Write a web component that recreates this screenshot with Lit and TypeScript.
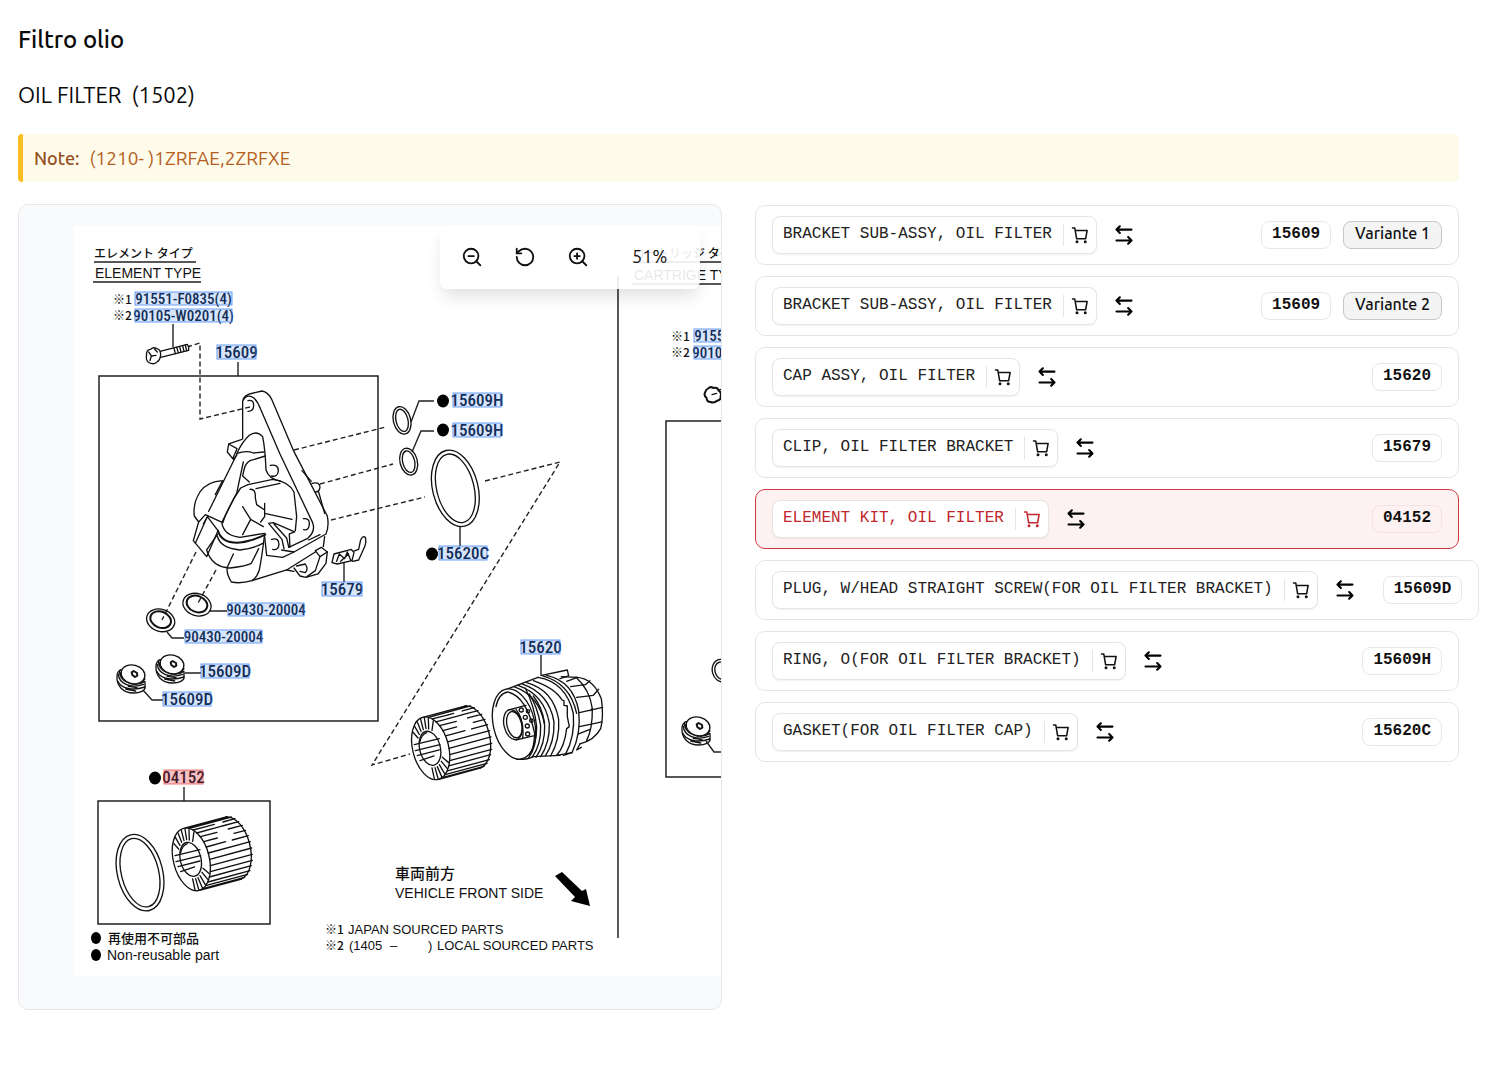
import { LitElement, html, svg, css } from "lit";
import { customElement, property } from "lit/decorators.js";
import { classMap } from "lit/directives/class-map.js";

interface Part {
  name: string;
  code: string;
  variant?: string;
  selected?: boolean;
}

interface Callout {
  code: string;
  x: number;
  y: number;
  w: number;
  small?: boolean;
  active?: boolean;
}

const PARTS: Part[] = [
  { name: "BRACKET SUB-ASSY, OIL FILTER", code: "15609", variant: "Variante 1" },
  { name: "BRACKET SUB-ASSY, OIL FILTER", code: "15609", variant: "Variante 2" },
  { name: "CAP ASSY, OIL FILTER", code: "15620" },
  { name: "CLIP, OIL FILTER BRACKET", code: "15679" },
  { name: "ELEMENT KIT, OIL FILTER", code: "04152", selected: true },
  { name: "PLUG, W/HEAD STRAIGHT SCREW(FOR OIL FILTER BRACKET)", code: "15609D" },
  { name: "RING, O(FOR OIL FILTER BRACKET)", code: "15609H" },
  { name: "GASKET(FOR OIL FILTER CAP)", code: "15620C" },
];

const CALLOUTS: Callout[] = [
  { code: "91551-F0835(4)", x: 135, y: 292, w: 97, small: true },
  { code: "90105-W0201(4)", x: 135, y: 309, w: 97, small: true },
  { code: "15609", x: 217, y: 345, w: 39 },
  { code: "15609H", x: 453, y: 393, w: 48 },
  { code: "15609H", x: 453, y: 423, w: 48 },
  { code: "15620C", x: 439, y: 546, w: 48 },
  { code: "15679", x: 322, y: 582, w: 40 },
  { code: "90430-20004", x: 228, y: 603, w: 76, small: true },
  { code: "90430-20004", x: 185, y: 630, w: 77, small: true },
  { code: "15609D", x: 201, y: 664, w: 48 },
  { code: "15609D", x: 163, y: 692, w: 48 },
  { code: "15620", x: 521, y: 640, w: 39 },
  { code: "04152", x: 164, y: 770, w: 39, active: true },
  { code: "91551-F0835(4)", x: 694, y: 329, w: 97, small: true },
  { code: "90105-W0201(4)", x: 694, y: 346, w: 97, small: true },
];

/* Point on an ellipse tilted by `tilt` degrees. */
function onEllipse(cx: number, cy: number, rx: number, ry: number, tilt: number, deg: number) {
  const t = (deg * Math.PI) / 180;
  const a = (tilt * Math.PI) / 180;
  const x = rx * Math.cos(t);
  const y = ry * Math.sin(t);
  return [
    Math.round(cx + x * Math.cos(a) - y * Math.sin(a)),
    Math.round(cy + x * Math.sin(a) + y * Math.cos(a)),
  ];
}

/* Pleated paper filter element, drawn at three units per pixel. */
function filterElement(transform: string) {
  const lines: string[] = [];
  for (let i = 0; i <= 15; i++) {
    const deg = -84 + i * 11.5;
    const [x, y] = onEllipse(212, 925, 54, 96, -14, deg);
    if (i < 7 && i > 1) {
      const cut = 34 + ((i * 17) % 26);
      lines.push(`M${x} ${y}l${cut} ${Math.round(-cut * 0.27)}`);
      const back = 30 + ((i * 13) % 20);
      lines.push(`M${x + 126} ${y - 34}l${-back} ${Math.round(back * 0.27)}`);
      if (i < 4) lines.push(`M${x + cut} ${Math.round(y - cut * 0.27)}l22 -6`);
    } else {
      lines.push(`M${x} ${y}l126 -34`);
    }
  }
  const rim: string[] = [];
  for (const deg of [-140, -126, -112, -99, -86, -73, -58, 36, 50, 64, 77, 90, 103]) {
    const [x1, y1] = onEllipse(212, 925, 52, 93, -14, deg);
    const [x2, y2] = onEllipse(210, 925, 36, 60, -14, deg);
    rim.push(`M${x1} ${y1}L${x2} ${y2}`);
  }
  const [tx, ty] = onEllipse(338, 891, 54, 96, -14, -90);
  const [bx, by] = onEllipse(338, 891, 54, 96, -14, 90);
  return svg`<g class="ink" transform=${transform}>
    <ellipse class="paper" cx="212" cy="925" rx="54" ry="96" transform="rotate(-14 212 925)" />
    <ellipse cx="210" cy="925" rx="31" ry="52" transform="rotate(-14 210 925)" />
    <path d=${`M${tx} ${ty}A54 96 -14 0 1 ${bx} ${by}`} />
    <path d=${lines.join("")} />
    <path d=${rim.join("")} />
    <path d="M163 914L238 896M166 932L240 914M172 947L238 930M180 962L222 948M180 905Q184 884 200 878" />
  </g>`;
}

/* Threaded plug with a hex socket, drawn at three units per pixel. */
function plug(transform: string) {
  return svg`<g class="ink" transform=${transform}>
    <path class="paper" d="M-42 -8C-44 20 -24 42 8 42C28 42 42 34 42 26V8L-30 -28C-38 -24 -42 -16 -42 -8Z" />
    <path d="M-40 6C-30 30 6 36 42 24M-34 -26C-40 6 10 28 40 8M-32 -18C-34 10 14 22 42 0M-38 -14C-36 14 0 30 38 16" />
    <path d="M-16 30L14 36M-8 22L18 26" />
    <ellipse class="paper" cx="6" cy="-14" rx="36" ry="28" transform="rotate(14 6 -14)" />
    <path class="bold" d="M2 -20L8 -24L18 -18L19 -10L12 -6L4 -12Z" />
  </g>`;
}

function oRing(cx: number, cy: number, rx: number, ry: number, gap: number, tilt = -14) {
  const t = `rotate(${tilt} ${cx} ${cy})`;
  return svg`<ellipse cx=${cx} cy=${cy} rx=${rx} ry=${ry} transform=${t} />
    <ellipse cx=${cx} cy=${cy} rx=${rx - gap} ry=${ry - gap} transform=${t} />`;
}

@customElement("parts-diagram")
export class PartsDiagram extends LitElement {
  static styles = css`
    :host {
      display: block;
      line-height: 0;
    }
    .sheet {
      display: block;
      width: 100%;
      height: auto;
    }
    .page {
      fill: #fff;
    }
    .ink {
      fill: none;
      stroke: #111;
      stroke-width: 4;
      stroke-linecap: round;
      stroke-linejoin: round;
    }
    .ink .bold {
      stroke-width: 6;
    }
    .ink .paper {
      fill: #fff;
    }
    .fine {
      fill: none;
      stroke: #222;
      stroke-width: 1.4;
    }
    .frame {
      fill: none;
      stroke: #222;
      stroke-width: 1.5;
    }
    .dash {
      fill: none;
      stroke: #222;
      stroke-width: 1.4;
      stroke-dasharray: 5 3;
    }
    .dot {
      fill: #000;
    }
    .note {
      fill: #111;
      font-family: "Liberation Sans", "Noto Sans CJK JP", sans-serif;
    }
    .s12 {
      font-size: 12px;
    }
    .s13 {
      font-size: 13px;
    }
    .s14 {
      font-size: 14px;
    }
    .s15 {
      font-size: 15px;
    }
    .jp {
      font-family: "Noto Sans CJK JP", sans-serif;
      font-weight: 500;
    }
    .code {
      fill: #0b1730;
      font-family: "Roboto Condensed", "Liberation Sans Narrow", sans-serif;
      font-size: 17px;
      font-weight: 500;
    }
    .code.small {
      font-size: 15px;
    }
    .spot {
      fill: #3b82f6;
      fill-opacity: 0.2;
      stroke: #3b82f6;
      stroke-opacity: 0.75;
    }
    .spot.active {
      fill: #dc2626;
      fill-opacity: 0.28;
      stroke: #dc2626;
      stroke-opacity: 0.6;
    }
  `;

  private callout(c: Callout) {
    const h = c.small ? 13 : 14;
    return svg`<g>
      <text class=${classMap({ code: true, small: !!c.small })} x=${c.x + c.w / 2} y=${c.y + h - 1}
        text-anchor="middle">${c.code}</text>
      <rect class=${classMap({ spot: true, active: !!c.active })} x=${c.x} y=${c.y} width=${c.w} height=${h} />
    </g>`;
  }

  render() {
    return html`<svg class="sheet" viewBox="19 205 702 804" role="img" aria-label="OIL FILTER (1502)">
      <rect class="page" x="74" y="226" width="900" height="750" />

      <text class="note jp s12" x="94" y="258">エレメント タイプ</text>
      <text class="note s14" x="95" y="278">ELEMENT TYPE</text>
      <text class="note jp s12" x="633" y="258">カートリッジ タイプ</text>
      <text class="note s14" x="634" y="280">CARTRIGE TYPE</text>
      <path class="frame" d="M94 262H196M93 282H201M632 262H740M632 284H740" />
      <text class="note jp s12" x="113" y="304">※1</text>
      <text class="note jp s12" x="113" y="320">※2</text>
      <text class="note jp s12" x="671" y="341">※1</text>
      <text class="note jp s12" x="671" y="357">※2</text>

      <path class="frame" d="M99 376H378V721H99ZM98 801H270V924H98ZM618 276V938M760 421H666V777H760" />
      <path class="fine" d="M238 362V376M173 324V347M184 787V801M344 563V582M460 527V546M541 655V676
        M411 422L419 401H434M412 452L421 431H434M209 611H227M167 632L172 638H184M185 673H201M142 689L152 700H163" />
      <path class="dash" d="M187 347L200 343V419L250 407M294 450L386 427M320 484L393 464M331 520L425 497
        M485 481L560 462L372 765L410 754M196 552L162 620M216 570L197 605" />
      <ellipse class="dot" cx="443" cy="401" rx="6" ry="6.500" />
      <ellipse class="dot" cx="443" cy="430" rx="6" ry="6.500" />
      <ellipse class="dot" cx="432" cy="554" rx="6" ry="6.500" />
      <ellipse class="dot" cx="155" cy="778" rx="6" ry="6.500" />
      <ellipse class="dot" cx="96" cy="938" rx="5" ry="6" />
      <ellipse class="dot" cx="96" cy="955" rx="5" ry="6" />

      <!-- flange bolt -->
      <g class="ink" transform="translate(70 220) scale(.3333)">
        <path class="paper" d="M270 394L352 373Q358 380 356 391L272 412" />
        <path d="M312 384L316 401M320 382L325 398M329 380L333 396M338 377L342 394M346 375L350 392" />
        <path class="paper" d="M230 398Q232 388 242 388Q250 380 260 386Q272 388 272 404Q271 420 262 425Q254 434 243 430Q230 428 229 414Z" />
        <path d="M236 396L244 408L258 406M244 408L240 422M254 388L262 396" />
      </g>

      <!-- filter bracket -->
      <g class="ink" transform="translate(90 370) scale(.3333)">
        <path d="M458 206V94Q461 74 490 69L516 63Q534 66 545 88L575 158L612 245L712 438Q718 470 708 492L612 546L575 540" />
        <path d="M460 90Q472 70 492 84Q504 96 512 118L570 252L668 458Q678 484 652 506L596 532" />
        <path d="M474 92Q492 88 491 108Q490 124 474 124M541 286Q566 282 565 304Q562 322 545 318M640 446Q660 444 658 464Q656 482 641 479M545 508Q567 502 567 524Q565 542 548 538" />
        <path d="M456 208L416 222L412 246L430 268L440 256M416 222L441 236L428 266M441 250Q456 216 478 196Q500 180 518 200Q526 240 528 300Q536 326 572 334" />
        <path d="M441 250Q470 240 490 249L522 246M526 258L480 272Q466 280 462 300L458 318L478 336M441 252L356 424M460 276L440 370L396 456" />
        <path d="M398 332Q352 334 330 366Q308 400 313 438L326 456M398 332L376 374M326 456L346 434L398 458M340 462L352 440L384 482L350 560L310 512L326 456M316 520L352 440" />
        <path d="M398 458Q420 398 452 354L474 344L548 328Q596 334 612 366L620 440L616 482M498 356L570 340M480 358Q498 356 496 384L500 404L524 420V440L512 456M524 400V440M524 430L606 448" />
        <path d="M458 410L482 448L520 470M482 448L458 494M396 460Q402 496 450 502L524 490" />
        <path class="bold" d="M384 482Q394 518 442 518Q480 516 526 494" />
        <path d="M382 498Q390 534 450 540Q490 536 518 520M350 540Q366 592 420 594Q470 588 484 580L506 536M350 540L382 494M524 492Q516 560 508 600Q500 624 486 632Q452 642 424 636Q408 610 412 592L430 552" />
        <path d="M536 460L550 458L614 486L598 492L600 532M536 460L576 508L582 536M552 462L590 504L596 530" />
        <path d="M524 500L530 556L578 562L612 546M486 632L590 600L676 546M676 542L694 532L712 546L690 560Z" />
        <path d="M712 546L708 580L684 612L648 622L630 618L612 594M690 560L676 602L648 622M620 588L646 582Q656 598 646 608L630 604M590 600L612 604" />
        <path d="M636 302L664 334M666 340Q690 334 690 352Q688 366 676 366M686 366L704 430M704 500L700 530M656 510L690 494" />
        <path d="M726 578L732 552L784 538L792 548L786 572L742 582ZM740 574L748 552L764 566L772 546L782 570M752 574L776 552M790 544L806 538L812 510Q818 496 826 502Q830 514 824 530L806 570L788 574" />
      </g>

      <!-- sealing rings and plugs -->
      <g class="ink" transform="translate(90 580) scale(.3333)">
        <ellipse cx="321" cy="74" rx="43" ry="33" transform="rotate(18 321 74)" />
        <ellipse class="bold" cx="321" cy="72" rx="32" ry="24" transform="rotate(22 321 72)" />
        <ellipse cx="212" cy="121" rx="43" ry="33" transform="rotate(18 212 121)" />
        <ellipse class="bold" cx="212" cy="119" rx="32" ry="24" transform="rotate(22 212 119)" />
      </g>
      ${plug("translate(170 669) scale(.3333)")}
      ${plug("translate(131 679) scale(.3333)")}
      ${plug("translate(696 731) scale(.3333)")}
      <path class="fine" d="M706 741L714 752H730" />

      <!-- O-rings -->
      <g class="ink" transform="translate(360 440) scale(.3333)">
        ${oRing(126, -59, 26, 42, 8)}
        ${oRing(146, 65, 26, 41, 8)}
        ${oRing(286, 145, 68, 117, 12)}
      </g>
      <g class="ink" transform="translate(80 760) scale(.3333)">
        ${oRing(180, 338, 68, 117, 12)}
      </g>

      ${filterElement("translate(360 440) scale(.3333)")}
      ${filterElement("translate(80 760) scale(.3333) translate(122 -627)")}

      <!-- filter cap -->
      <g class="ink" transform="translate(360 440) scale(.3333)">
        <path d="M604 710L652 712Q700 716 724 776Q732 830 722 866Q704 900 660 912" />
        <path d="M648 712Q690 750 697 806Q698 866 680 902M620 724L652 712M632 740L676 734M650 772L700 766M658 818L728 802M658 860L726 846M656 882L690 868M676 734L690 722M700 766L716 748M696 806L690 812M660 912L650 930L664 922" />
        <path d="M545 706L622 690L626 708L600 716M560 706Q640 724 656 812Q664 880 636 938L610 946" />
        <path d="M534 712Q618 726 640 820Q646 890 616 944M548 708Q630 730 650 820" />
        <path d="M520 722Q584 744 606 780L612 782V796L622 798V830L628 860L620 866Q614 920 590 946L636 938" />
        <path d="M440 748L534 712M470 958Q500 960 520 950L600 946" />
        <path d="M500 728Q580 750 596 838Q600 900 572 948M486 732Q568 760 582 846Q584 906 556 948M474 736Q554 764 568 850Q570 908 542 950M462 740Q540 768 554 856Q556 912 528 952" />
        <path d="M520 768Q546 800 554 850M508 762Q532 800 542 856Q544 916 516 952M496 744Q524 800 530 860Q530 920 506 954" />
        <ellipse class="paper" cx="462" cy="852" rx="62" ry="107" transform="rotate(-13 462 852)" />
        <path d="M408 800Q416 760 444 756Q500 770 524 880Q522 930 508 944" />
        <ellipse cx="459" cy="854" rx="27" ry="46" transform="rotate(-13 459 854)" />
        <ellipse cx="463" cy="854" rx="22" ry="40" transform="rotate(-13 463 854)" />
        <path d="M446 810L498 796M470 900L520 888M468 808Q494 840 488 896" />
        <circle cx="484" cy="810" r="6" />
        <circle cx="496" cy="832" r="6" />
        <circle cx="502" cy="858" r="6" />
        <circle cx="503" cy="882" r="6" />
        <circle cx="504" cy="814" r="5" />
        <circle cx="514" cy="842" r="5" />
      </g>

      <!-- right-hand sheet fragments -->
      <g class="ink" transform="translate(400 220) scale(.3333)">
        <path class="bold" d="M924 506Q932 498 940 504Q952 500 956 512Q966 518 962 528Q964 540 952 542Q942 550 932 546Q920 546 920 534Q910 526 916 516Q918 508 924 506Z" />
        <path d="M936 524L950 520M956 510L968 507" />
      </g>
      <g class="ink" transform="translate(640 380) scale(.3333)">
        ${oRing(244, 872, 27, 34, 8)}
      </g>

      <path class="dot" d="M555 876L562 872L582 891L586 889L590 906L571 901L575 897Z" />
      <text class="note jp s15" x="395" y="879">車両前方</text>
      <text class="note s14" x="395" y="898">VEHICLE FRONT SIDE</text>
      <text class="note jp s12" x="325" y="934">※1</text>
      <text class="note s13" x="348" y="934">JAPAN SOURCED PARTS</text>
      <text class="note jp s12" x="325" y="950">※2</text>
      <text class="note s13" x="349" y="950">(1405</text>
      <text class="note s13" x="390" y="950">–</text>
      <text class="note s13" x="428" y="950">)</text>
      <text class="note s13" x="437" y="950">LOCAL SOURCED PARTS</text>
      <text class="note jp s13" x="108" y="943">再使用不可部品</text>
      <text class="note s14" x="107" y="960">Non-reusable part</text>

      ${CALLOUTS.map((c) => this.callout(c))}
    </svg>`;
  }
}

@customElement("part-row")
export class PartRow extends LitElement {
  @property({ attribute: false }) part!: Part;

  static styles = css`
    :host {
      display: block;
    }
    .row {
      display: flex;
      align-items: center;
      gap: 8px;
      box-sizing: border-box;
      min-width: max-content;
      height: 60px;
      padding: 0 16px;
      border: 1px solid #e5e5e5;
      border-radius: 10px;
      background: #fff;
    }
    .chip {
      display: flex;
      align-items: center;
      height: 36px;
      border: 1px solid #e5e5e5;
      border-radius: 8px;
      background: #fff;
      box-shadow: 0 1px 2px rgb(0 0 0 / 6%);
    }
    .name,
    .code {
      font-family: "Liberation Mono", monospace;
      font-size: 16px;
      white-space: pre;
    }
    .name {
      padding: 0 11px 2px 10px;
      color: #222;
      line-height: 20px;
    }
    button {
      display: flex;
      align-items: center;
      justify-content: center;
      margin: 0;
      border: 0;
      background: none;
      color: #111;
      cursor: pointer;
    }
    .cart {
      height: 22px;
      padding: 0 7px;
      border-left: 1px solid #e5e5e5;
    }
    .swap {
      padding: 8px 9px;
      color: #000;
    }
    svg {
      fill: none;
      stroke: currentColor;
      stroke-width: 2;
      stroke-linecap: round;
      stroke-linejoin: round;
    }
    .swap svg {
      stroke-width: 2.5;
    }
    .tags {
      display: flex;
      gap: 12px;
      margin-left: auto;
      padding-left: 11px;
    }
    .tag {
      box-sizing: border-box;
      height: 28px;
      padding: 0 10px;
      border: 1px solid #e8e8e8;
      border-radius: 8px;
      color: #111;
      line-height: 24px;
    }
    .code {
      font-weight: 700;
    }
    .variant {
      padding: 0 11px;
      border-color: #c6c6c6;
      background: #f4f4f4;
      font-size: 16px;
      font-weight: 500;
      line-height: 22px;
    }
    .selected {
      border-color: #d03a40;
      background: #fef1f1;
    }
    .selected .name,
    .selected .cart {
      color: #c1272d;
    }
    .selected .tag {
      border-color: #f3e3e3;
    }
  `;

  render() {
    const { name, code, variant, selected } = this.part;
    return html`<div class=${classMap({ row: true, selected: !!selected })}>
      <div class="chip">
        <span class="name">${name}</span>
        <button class="cart" type="button" aria-label="Aggiungi al carrello">
          <svg width="18" height="18" viewBox="0 0 24 24">
            <circle cx="8" cy="21" r="1" />
            <circle cx="19" cy="21" r="1" />
            <path d="M2 2.500h3l2.500 14.500h12l2-11H6" />
          </svg>
        </button>
      </div>
      <button class="swap" type="button" aria-label="Alternative">
        <svg width="20" height="20" viewBox="0 0 24 24">
          <path d="M21 5.500H3M7 1.500L3 5.500L7 9.500M3 18.500H21M17 14.500L21 18.500L17 22.500" />
        </svg>
      </button>
      <div class="tags">
        <span class="tag code">${code}</span>
        ${variant ? html`<span class="tag variant">${variant}</span>` : null}
      </div>
    </div>`;
  }
}

@customElement("app-root")
export class AppRoot extends LitElement {
  static styles = css`
    :host {
      display: block;
      box-sizing: border-box;
      min-height: 100vh;
      padding: 24px 34px 24px 18px;
      overflow-x: hidden;
      background: #fff;
      color: #0a0a0a;
      font-family: Ubuntu, "Noto Sans", sans-serif;
    }
    h1,
    h2 {
      margin: 0;
      line-height: 32px;
      white-space: pre;
    }
    h1 {
      font-size: 24px;
      font-weight: 500;
    }
    h2 {
      margin-top: 23px;
      font-size: 22px;
      font-weight: 400;
    }
    .note {
      display: flex;
      align-items: center;
      gap: 10px;
      box-sizing: border-box;
      height: 48px;
      margin: 23px 0 22px;
      padding-left: 11px;
      border-left: 5px solid #fbbf24;
      border-radius: 4px;
      background: #fffbeb;
      color: #b45f1d;
      font-size: 19px;
      line-height: 24px;
    }
    .note strong {
      color: #92501d;
      font-size: 18px;
      font-weight: 500;
    }
    .columns {
      display: grid;
      grid-template-columns: repeat(2, minmax(0, 1fr));
      align-items: start;
      gap: 33px;
    }
    .viewer {
      position: relative;
      overflow: hidden;
      border: 1px solid #e5e7eb;
      border-radius: 10px;
      background: #f9fafc;
    }
    .toolbar {
      position: absolute;
      top: 20px;
      right: 21px;
      display: flex;
      align-items: center;
      gap: 11px;
      box-sizing: border-box;
      width: 260px;
      height: 64px;
      padding: 0 11px;
      border-radius: 8px;
      background: rgb(255 255 255 / 90%);
      box-shadow: 0 10px 18px -4px rgb(0 0 0 / 14%);
      font-size: 18px;
    }
    .toolbar button {
      display: flex;
      align-items: center;
      justify-content: center;
      width: 42px;
      height: 42px;
      padding: 0;
      border: 0;
      background: none;
      color: #111;
      cursor: pointer;
    }
    .toolbar svg {
      fill: none;
      stroke: currentColor;
      stroke-width: 2;
      stroke-linecap: round;
      stroke-linejoin: round;
    }
    .toolbar output {
      flex: 1;
      padding: 0 0 2px 22px;
      color: #111;
    }
    .parts {
      display: grid;
      grid-template-columns: minmax(0, 1fr);
      gap: 11px;
      margin: 0;
      padding: 1px 0;
      list-style: none;
    }
  `;

  render() {
    return html`
      <h1>Filtro olio</h1>
      <h2>OIL FILTER  (1502)</h2>
      <div class="note"><strong>Note:</strong><span>(1210- )1ZRFAE,2ZRFXE</span></div>
      <main class="columns">
        <section class="viewer">
          <parts-diagram></parts-diagram>
          <div class="toolbar">
            <button type="button" aria-label="Zoom out">
              <svg width="22" height="22" viewBox="0 0 24 24">
                <circle cx="11" cy="11" r="8" />
                <path d="M21 21L16.650 16.650M8 11H14" />
              </svg>
            </button>
            <button type="button" aria-label="Reset">
              <svg width="22" height="22" viewBox="0 0 24 24">
                <path d="M3 12a9 9 0 1 0 9-9 9.750 9.750 0 0 0-6.740 2.740L3 8" />
                <path d="M3 3v5h5" />
              </svg>
            </button>
            <button type="button" aria-label="Zoom in">
              <svg width="22" height="22" viewBox="0 0 24 24">
                <circle cx="11" cy="11" r="8" />
                <path d="M21 21L16.650 16.650M11 8V14M8 11H14" />
              </svg>
            </button>
            <output>51%</output>
          </div>
        </section>
        <ul class="parts">
          ${PARTS.map((part) => html`<li><part-row .part=${part}></part-row></li>`)}
        </ul>
      </main>
    `;
  }
}
